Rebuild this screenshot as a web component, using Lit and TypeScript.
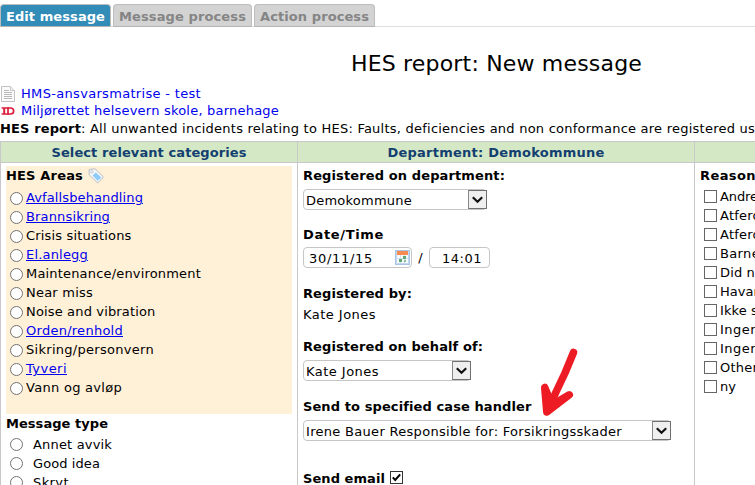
import { LitElement, html, css, svg } from "lit";
import { customElement, property } from "lit/decorators.js";
import { classMap } from "lit/directives/class-map.js";

/** A single line of text, tracked so that it fills `w` pixels. */
@customElement("fit-text")
class FitText extends LitElement {
  @property({ type: Number }) w = 0;
  static styles = css`
    :host { display: inline-block; white-space: nowrap; }
  `;
  render() { return html`<slot></slot>`; }
  firstUpdated() {
    const natural = this.getBoundingClientRect().width;
    const count = (this.textContent ?? "").trim().length;
    if (this.w && count > 1) {
      this.style.letterSpacing = `${(this.w - natural) / count}px`;
    }
  }
}

@customElement("select-box")
class SelectBox extends LitElement {
  static styles = css`
    :host { display: flex; height: 21px; box-sizing: border-box; border: 1px solid #c6c6c6; border-radius: 4px; background: #fff; align-items: stretch; }
    .text { flex: 1; padding-left: 2px; line-height: 21px; }
    .btn { width: 19px; margin: 0 -1px 0 0; box-sizing: border-box; border: 1px solid #707070; border-left-color: #888; background: #efefef; display: flex; align-items: center; justify-content: center; }
    svg { display: block; }
  `;
  render() {
    return html`<div class="text"><slot></slot></div>
      <div class="btn"><svg width="11" height="8" viewBox="0 0 11 8"><path d="M0.8 1.2 5.5 5.7 10.2 1.2" fill="none" stroke="#111" stroke-width="2.2"/></svg></div>`;
  }
}

interface Option { text: string; w: number; link?: boolean; }

const areas: Option[] = [
  { text: "Avfallsbehandling", w: 117, link: true },
  { text: "Brannsikring", w: 84, link: true },
  { text: "Crisis situations", w: 105.5 },
  { text: "El.anlegg", w: 62, link: true },
  { text: "Maintenance/environment", w: 175 },
  { text: "Near miss", w: 67 },
  { text: "Noise and vibration", w: 129.5 },
  { text: "Orden/renhold", w: 97, link: true },
  { text: "Sikring/personvern", w: 128 },
  { text: "Tyveri", w: 41, link: true },
  { text: "Vann og avløp", w: 96 },
];
const types: Option[] = [
  { text: "Annet avvik", w: 79 },
  { text: "Good idea", w: 67 },
  { text: "Skryt", w: 36 },
];
const reasons: Option[] = [
  { text: "Andre", w: 38 },
  { text: "Atferd", w: 41 },
  { text: "Atferd", w: 41 },
  { text: "Barne", w: 40 },
  { text: "Did n", w: 35 },
  { text: "Havar", w: 39 },
  { text: "Ikke s", w: 38 },
  { text: "Ingen", w: 39 },
  { text: "Ingen", w: 39 },
  { text: "Other", w: 38 },
  { text: "ny", w: 16 },
];
const tabs = [
  { text: "Edit message", w: 99, active: true },
  { text: "Message process", w: 127, active: false },
  { text: "Action process", w: 109, active: false },
];

const docIcon = svg`<svg width="15" height="16" viewBox="0 0 15 16"><path d="M.5.5h9l4 4v11h-13z" fill="#fbfbfb" stroke="#c2c2c2"/><path d="M9.5.5v4h4" fill="#eee" stroke="#c9c9c9"/><path d="M3 4.5h5M3 6.5h8M3 8.5h8M3 10.5h8M3 12.5h8" stroke="#b8b8b8"/></svg>`;
const idIcon = svg`<svg width="14" height="8" viewBox="0 0 14 8"><path d="M.6 1H8M.6 7H8" fill="none" stroke="#dc1f3c" stroke-width="1.3"/><path d="M3.2 1v6" stroke="#dc1f3c" stroke-width="2"/><path d="M7 1v6h2.5c4.2 0 4.2-6 0-6z" fill="none" stroke="#dc1f3c" stroke-width="1.7"/></svg>`;
const tagIcon = svg`<svg width="17" height="17" viewBox="0 0 17 17"><path d="M1 1.5 7 .8 15.5 9 9.8 15 1.3 7z" fill="#f4f6f8" stroke="#b9bec4" stroke-linejoin="round"/><path d="M7.8 4.4 13.3 9.4 9.6 12.8 4.6 7.6z" fill="#8ccbfa"/><circle cx="4" cy="3.8" r="1.2" fill="#fff" stroke="#b9bec4" stroke-width=".8"/></svg>`;
const calIcon = svg`<svg width="15" height="15" viewBox="0 0 15 15"><rect x=".5" y=".5" width="14" height="14" fill="#c3d8ef" stroke="#a9c5e6"/><rect x="2" y="1" width="11" height="12" fill="#f6f9fd"/><rect x="2" y="1" width="11" height="4" fill="#f58b51"/><path d="M2 8.5h11M5.5 5v8M9.5 5v8" stroke="#d5e1ef"/><rect x="8" y="6" width="3" height="3" fill="#5fa872"/><rect x="4" y="9" width="3" height="3" fill="#5fa872"/><rect x="9" y="10" width="2" height="2" fill="#88bf95"/></svg>`;

@customElement("app-root")
class AppRoot extends LitElement {
  static styles = css`
    :host { display: block; position: relative; width: 755px; height: 485px; overflow: hidden; background: #fff; color: #000; font: 13px/19px Verdana, "DejaVu Sans", sans-serif; }
    svg { display: block; flex: none; }
    .tabs { display: flex; gap: 2px; height: 27px; padding-top: 4px; box-sizing: border-box; border-bottom: 1px solid #ddd; }
    .tab { box-sizing: border-box; height: 23px; padding: 0 5px; border: 1px solid #bdbdbd; border-bottom-color: #b5b5b5; border-radius: 4px 4px 0 0; background: #d3d3d3; color: #858585; font-weight: bold; line-height: 23px; }
    .tab.active { background: #318cb7; color: #fff; }
    .title { height: 36px; margin: 19px 0 0 351px; font-size: 22px; line-height: 36px; white-space: nowrap; }
    .doc { display: flex; align-items: center; height: 17px; line-height: 17px; color: #0000ee; }
    .doc .ico { width: 21px; padding-left: 1px; box-sizing: border-box; }
    .first { margin-top: 2px; height: 18px; }
    .first .ico { padding-top: 2px; }
    .intro { height: 19px; line-height: 19px; white-space: nowrap; }
    b { font-weight: bold; }
    .table { display: grid; grid-template-columns: 297px 397px 120px; grid-template-rows: 22px 330px; margin-top: 3px; }
    .th, .td { border-left: 1px solid #c8c8c8; box-sizing: border-box; }
    .th { border-top: 1px solid #c8c8c8; border-bottom: 1px solid #c8c8c8; background: #d5e8c6; color: #123f70; font-weight: bold; text-align: center; line-height: 22px; }
    .area { margin: 3px 5px 0 5px; height: 248px; background: #fff0d8; }
    .area .opt { line-height: 17px; }
    .head { display: flex; gap: 5px; height: 23px; line-height: 20px; font-weight: bold; }
    .head svg { margin-top: 2px; }
    .opt { display: flex; align-items: flex-start; height: 19px; line-height: 19px; padding-left: 4px; gap: 3px; }
    .opt.wide { gap: 10px; }
    .radio { width: 13px; height: 13px; margin-top: 3px; box-sizing: border-box; border: 1px solid #737373; border-radius: 50%; background: #fff; flex: none; }
    .check { width: 13px; height: 13px; box-sizing: border-box; border: 1px solid #666; background: #fff; flex: none; }
    .opt .check { margin-top: 2px; }
    .link { color: #0000ee; text-decoration: underline; }
    .types { margin: 0 0 0 5px; }
    .types .head { height: 21px; }
    .form { padding: 3px 0 0 5px; }
    .label { height: 21px; line-height: 20px; font-weight: bold; display: flex; gap: 5px; }
    .label .check { margin-top: 2px; border-color: #333; }
    .s1 { width: 184px; margin-top: 2px; margin-bottom: 15px; }
    .row { display: flex; height: 21px; margin-bottom: 16px; align-items: center; margin-top: 1px; }
    .field { display: flex; align-items: center; box-sizing: border-box; height: 21px; border: 1px solid #c6c6c6; border-radius: 4px; }
    .field fit-text { line-height: 21px; padding-top: 1px; }
    .date { width: 109px; padding: 0 1px 0 5px; justify-content: space-between; }
    .time { width: 61px; padding-left: 12px; }
    .slash { width: 17px; text-align: center; }
    .by { height: 32px; line-height: 20px; }
    .s2 { width: 168px; margin-top: 2px; margin-bottom: 16px; }
    .s3 { width: 368px; margin-top: 2px; margin-bottom: 28px; }
    .reasons { padding: 3px 0 0 5px; }
    .reasons .head { height: 22px; }
    .reasons .opt { line-height: 17px; }
    .arrow { position: absolute; left: 538px; top: 346px; }
  `;

  option(o: Option, kind: string, wide = false) {
    return html`<div class=${classMap({ opt: true, wide })}>
      <span class=${kind}></span><fit-text class=${classMap({ link: !!o.link })} .w=${o.w}>${o.text}</fit-text>
    </div>`;
  }

  render() {
    return html`
      <div class="tabs">${tabs.map(t => html`<div class=${classMap({ tab: true, active: t.active })}><fit-text .w=${t.w}>${t.text}</fit-text></div>`)}</div>
      <div class="title"><fit-text .w=${291}>HES report: New message</fit-text></div>
      <div class="doc first"><span class="ico">${docIcon}</span><fit-text .w=${180}>HMS-ansvarsmatrise - test</fit-text></div>
      <div class="doc"><span class="ico">${idIcon}</span><fit-text .w=${258}>Miljørettet helsevern skole, barnehage</fit-text></div>
      <div class="intro"><b><fit-text .w=${81}>HES report</fit-text></b><fit-text .w=${674}>: All unwanted incidents relating to HES: Faults, deficiencies and non conformance are registered us</fit-text></div>
      <div class="table">
        <div class="th"><fit-text .w=${195}>Select relevant categories</fit-text></div>
        <div class="th"><fit-text .w=${217}>Department: Demokommune</fit-text></div>
        <div class="th"></div>
        <div class="td">
          <div class="area">
            <div class="head"><fit-text .w=${77}>HES Areas</fit-text>${tagIcon}</div>
            ${areas.map(o => this.option(o, "radio"))}
          </div>
          <div class="types">
            <div class="head"><fit-text .w=${102}>Message type</fit-text></div>
            ${types.map(o => this.option(o, "radio", true))}
          </div>
        </div>
        <div class="td form">
          <div class="label"><fit-text .w=${202}>Registered on department:</fit-text></div>
          <select-box class="s1"><fit-text .w=${106}>Demokommune</fit-text></select-box>
          <div class="label"><fit-text .w=${81}>Date/Time</fit-text></div>
          <div class="row">
            <div class="field date"><fit-text .w=${64}>30/11/15</fit-text>${calIcon}</div>
            <span class="slash">/</span>
            <div class="field time"><fit-text .w=${40}>14:01</fit-text></div>
          </div>
          <div class="label"><fit-text .w=${109}>Registered by:</fit-text></div>
          <div class="by"><fit-text .w=${73}>Kate Jones</fit-text></div>
          <div class="label"><fit-text .w=${180}>Registered on behalf of:</fit-text></div>
          <select-box class="s2"><fit-text .w=${73}>Kate Jones</fit-text></select-box>
          <div class="label"><fit-text .w=${228}>Send to specified case handler</fit-text></div>
          <select-box class="s3"><fit-text .w=${316}>Irene Bauer Responsible for: Forsikringsskader</fit-text></select-box>
          <div class="label"><fit-text .w=${82}>Send email</fit-text><span class="check"><svg width="11" height="11" viewBox="0 0 11 11"><path d="M1.8 5.4 4.2 8 9.2 2.4" fill="none" stroke="#000" stroke-width="2"/></svg></span></div>
        </div>
        <div class="td reasons">
          <div class="head"><fit-text .w=${56}>Reason</fit-text></div>
          ${reasons.map(o => this.option(o, "check"))}
        </div>
      </div>
      <svg class="arrow" width="44" height="74" viewBox="0 0 44 74"><g fill="none" stroke="#ed1c24" stroke-width="7.5" stroke-linecap="round" stroke-linejoin="round"><path d="M35.500 6.500 27 27 18 46 11 62"/><path fill="#ed1c24" d="M6.700 41.500 8.800 66 31.300 48.800 14 59z"/></g></svg>
    `;
  }
}
